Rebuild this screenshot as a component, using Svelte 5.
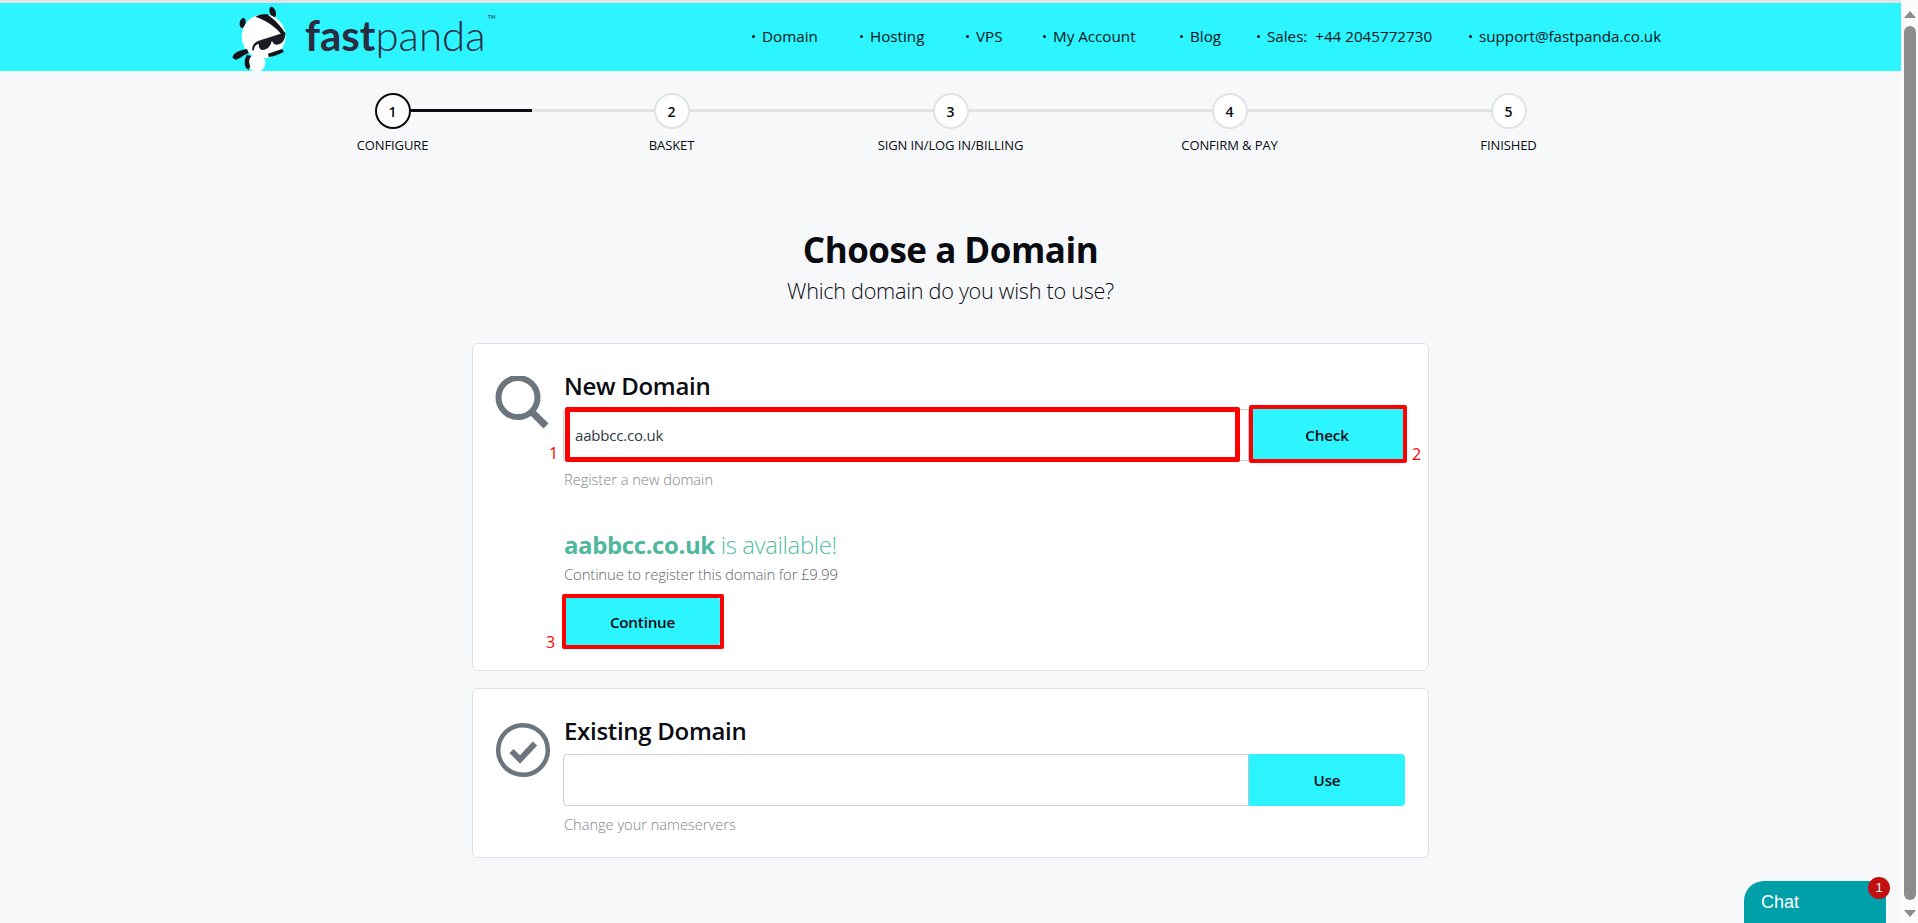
<script lang="ts">
  const navItems = [
    'Domain',
    'Hosting',
    'VPS',
    'My Account',
    'Blog',
    'Sales:\u00a0 +44 2045772730',
    'support@fastpanda.co.uk'
  ];

  const steps = ['Configure', 'Basket', 'Sign in/Log in/Billing', 'Confirm & Pay', 'Finished'];
</script>

<div class="window">
  <div class="page">
    <header class="topbar">
      <div class="logo">
        <svg class="panda" width="70" height="68" viewBox="0 0 210 204" aria-hidden="true">
          <ellipse cx="32" cy="60" rx="9" ry="15" fill="#14141c" transform="rotate(10 32 60)" />
          <ellipse cx="122" cy="27" rx="9" ry="16" fill="#14141c" transform="rotate(-20 122 27)" />
          <circle cx="95" cy="100" r="66" fill="#fff" />
          <path d="M70 41 C80 35 92 33 105 33 C128 50 148 70 160 92 L150 96 C132 72 102 52 70 41 Z" fill="#14141c" />
          <path d="M60 142 C60 125 68 118 80 113 L160 88 L160 96 C158 112 150 124 135 125 C128 125 122 120 120 113 L118 118 C116 130 105 140 92 141 C84 141 80 132 80 122 C70 125 66 132 66 142 Z" fill="#1c1c24" />
          <path d="M2 165 C0 155 15 142 45 138 L50 150 C35 155 22 170 10 170 Z" fill="#14141c" />
          <path d="M108 152 L150 138 L156 146 C140 155 125 160 110 162 Z" fill="#14141c" />
          <circle cx="74" cy="180" r="26" fill="#fff" />
          <path d="M45 155 C35 170 35 195 50 200 L55 190 C50 180 50 168 58 160 Z" fill="#14141c" />
        </svg>
        <span class="wordmark"><b>fast</b>panda<sup>TM</sup></span>
      </div>
      <nav class="nav">
        {#each navItems as item}
          <span class="nav-item">{item}</span>
        {/each}
      </nav>
    </header>

    <ol class="stepper">
      {#each steps as step, i}
        <li class="step" class:current={i === 0}>
          {#if i < steps.length - 1}
            <span class="connector"></span>
          {/if}
          <span class="dot">{i + 1}</span>
          <span class="step-label">{step}</span>
        </li>
      {/each}
    </ol>

    <div class="intro">
      <h1>Choose a Domain</h1>
      <p>Which domain do you wish to use?</p>
    </div>

    <section class="card first">
      <svg class="card-icon" width="56" height="56" viewBox="0 0 56 56" aria-hidden="true">
        <circle cx="23" cy="21.500" r="19.500" fill="none" stroke="#6c757d" stroke-width="6" />
        <path d="M36 35 L51 50" stroke="#6c757d" stroke-width="7" fill="none" />
      </svg>
      <div class="card-body">
        <h2>New Domain</h2>
        <div class="input-group">
          <div class="field">
            aabbcc.co.uk
            <span class="mark mark-input"></span>
            <span class="mark-num num-1">1</span>
          </div>
          <div class="action">
            Check
            <span class="mark mark-check"></span>
            <span class="mark-num num-2">2</span>
          </div>
        </div>
        <p class="hint">Register a new domain</p>
        <p class="result"><b>aabbcc.co.uk</b> is available!</p>
        <p class="price">Continue to register this domain for £9.99</p>
        <div class="action continue">
          Continue
          <span class="mark mark-continue"></span>
          <span class="mark-num num-3">3</span>
        </div>
      </div>
    </section>

    <section class="card second">
      <svg class="card-icon" width="56" height="56" viewBox="0 0 56 56" aria-hidden="true">
        <circle cx="28" cy="28" r="24.800" fill="none" stroke="#6c757d" stroke-width="4.500" />
        <path d="M16.500 29 L25 37.500 L40 21.500" fill="none" stroke="#6c757d" stroke-width="6" />
      </svg>
      <div class="card-body">
        <h2>Existing Domain</h2>
        <div class="input-group">
          <div class="field"></div>
          <div class="action">Use</div>
        </div>
        <p class="hint">Change your nameservers</p>
      </div>
    </section>

    <button class="chat">
      Chat
      <span class="badge">1</span>
    </button>
  </div>

  <aside class="scrollbar" aria-hidden="true">
    <span class="arrow up"></span>
    <span class="thumb"></span>
    <span class="arrow down"></span>
  </aside>
</div>

<style>
  :global(body) {
    margin: 0;
    overflow: hidden;
    background: #f6f8fa;
    font-family: "Open Sans", "Noto Sans", sans-serif;
    color: #0b0b12;
  }

  .window {
    display: flex;
    height: 923px;
    overflow: hidden;
  }

  .page {
    position: relative;
    flex: 1;
    min-width: 0;
    padding-top: 3px;
    background: #f6f8fa;
    box-shadow: inset 0 3px 0 #e4e4e4;
  }

  .topbar {
    display: flex;
    align-items: center;
    height: 68px;
    padding-left: 232px;
    background: #2cf5ff;
  }

  .logo {
    display: flex;
    align-items: center;
    width: 520px;
    height: 68px;
  }

  .panda {
    flex: none;
  }

  .wordmark {
    position: relative;
    margin-left: 3px;
    margin-top: -4px;
    font-family: Lato, sans-serif;
    font-size: 42px;
    font-weight: 300;
    color: #2a2c3f;
    line-height: 1;
  }

  .wordmark b {
    font-weight: 700;
  }

  .wordmark sup {
    position: absolute;
    top: 1px;
    right: -10px;
    font-size: 5px;
    font-weight: 400;
  }

  .nav {
    display: grid;
    grid-template-columns: 108px 106px 77px 137px 77px 212px auto;
    margin-top: -2px;
    font-size: 15.200px;
  }

  .nav-item {
    display: flex;
    align-items: center;
    white-space: nowrap;
    color: #04141a;
  }

  .nav-item::before {
    content: "";
    width: 3px;
    height: 3px;
    margin-right: 7px;
    border-radius: 50%;
    background: #04141a;
  }

  .stepper {
    display: grid;
    grid-template-columns: repeat(5, 279px);
    justify-content: center;
    margin: 22px 0 0;
    padding: 0;
    list-style: none;
  }

  .step {
    position: relative;
    display: flex;
    flex-direction: column;
    align-items: center;
    font-size: 13px;
  }

  .dot {
    position: relative;
    box-sizing: border-box;
    display: flex;
    align-items: center;
    justify-content: center;
    width: 36px;
    height: 36px;
    border: 2px solid #e2e3e5;
    border-radius: 50%;
    background: #fff;
    font-size: 14px;
    font-weight: 600;
  }

  .current .dot {
    border-color: #0b0b12;
  }

  .connector {
    position: absolute;
    top: 16px;
    left: 50%;
    width: 100%;
    height: 3px;
    background: #e2e3e5;
  }

  .current .connector {
    background: linear-gradient(to right, #0b0b12 139px, #e2e3e5 139px);
  }

  .step-label {
    margin-top: 7px;
    line-height: 18px;
    letter-spacing: -0.1px;
    text-transform: uppercase;
    white-space: nowrap;
  }

  .intro {
    margin-top: 72px;
    text-align: center;
  }

  h1 {
    margin: 0;
    font-size: 35px;
    font-weight: 700;
    line-height: 48px;
    letter-spacing: -0.5px;
  }

  .intro p {
    margin: 2px 0 0;
    font-size: 21.700px;
    font-weight: 300;
    line-height: 30px;
    letter-spacing: -0.3px;
  }

  .card {
    box-sizing: border-box;
    display: flex;
    gap: 12px;
    width: 957px;
    margin-left: 472px;
    padding: 0 23px 0 22px;
    border: 1px solid #dfe0e6;
    border-radius: 6px;
    background: #fff;
  }

  .first {
    height: 328px;
    margin-top: 37px;
    padding-top: 30px;
  }

  .second {
    height: 170px;
    margin-top: 17px;
    padding-top: 30px;
  }

  .second .card-icon {
    margin-top: 3px;
  }

  .card-icon {
    flex: none;
    margin-top: 2px;
  }

  .card-body {
    flex: 1;
    min-width: 0;
  }

  h2 {
    margin: 0;
    padding-left: 1px;
    font-size: 24px;
    font-weight: 600;
    line-height: 24px;
    letter-spacing: -0.3px;
  }

  .input-group {
    display: flex;
    height: 52px;
    margin-top: 11px;
  }

  .field {
    position: relative;
    box-sizing: border-box;
    display: flex;
    align-items: center;
    flex: 1;
    padding-left: 11px;
    border: 1px solid #ced0d6;
    border-right: 0;
    border-radius: 4px 0 0 4px;
    background: #fff;
    font-size: 15px;
    color: #2f3a45;
    letter-spacing: -0.2px;
  }

  .action {
    position: relative;
    flex: none;
    box-sizing: border-box;
    display: flex;
    align-items: center;
    justify-content: center;
    width: 157px;
    border-left: 1px solid #b4c8cc;
    border-radius: 0 4px 4px 0;
    background: #2cf5ff;
    font-size: 15.200px;
    font-weight: 600;
    color: #0b0b12;
    letter-spacing: -0.2px;
  }

  .continue {
    width: 155px;
    height: 49px;
    margin: 13px 0 0 2px;
    border: 0;
    border-radius: 4px;
  }

  /* red review annotations on top of the form */
  .mark {
    position: absolute;
    box-sizing: border-box;
    border: 4px solid #fe0000;
    border-radius: 2px;
    pointer-events: none;
  }

  .mark-input {
    top: -3px;
    bottom: -2px;
    left: 1px;
    right: 8px;
    border-width: 5px;
  }

  .mark-check {
    top: -4px;
    bottom: -2px;
    left: 0;
    right: -2px;
  }

  .mark-continue {
    inset: -3px -4px -3px -3px;
  }

  .mark-num {
    position: absolute;
    font-size: 16px;
    line-height: 20px;
    font-weight: 400;
    color: #fe0000;
  }

  .num-1 {
    left: -15px;
    top: 33px;
  }

  .num-2 {
    right: -16px;
    top: 35px;
  }

  .num-3 {
    left: -19px;
    top: 35px;
  }

  p {
    margin: 0;
  }

  .hint {
    margin-top: 8px;
    padding-left: 1px;
    font-size: 14.600px;
    font-weight: 300;
    line-height: 20px;
    color: #80858a;
  }

  .result {
    margin-top: 40px;
    padding-left: 1px;
    font-size: 24px;
    font-weight: 300;
    line-height: 32px;
    color: #55bda4;
    letter-spacing: -0.4px;
  }

  .result b {
    font-weight: 700;
    color: #4fb79d;
  }

  .price {
    margin-top: 3px;
    padding-left: 1px;
    font-size: 15px;
    font-weight: 300;
    line-height: 20px;
    color: #62676c;
    letter-spacing: -0.2px;
  }

  .chat {
    position: absolute;
    right: 15px;
    bottom: 0;
    width: 142px;
    height: 42px;
    padding: 0 0 0 17px;
    border: 0;
    border-radius: 20px 4px 0 0;
    background: #00a0a8;
    color: #fff;
    font-family: "Liberation Sans", Arial, sans-serif;
    font-size: 18px;
    text-align: left;
  }

  .badge {
    position: absolute;
    top: -4px;
    right: -4px;
    width: 22px;
    height: 22px;
    border-radius: 50%;
    background: #c01010;
    font-size: 13px;
    line-height: 22px;
    text-align: center;
  }

  .scrollbar {
    flex: none;
    display: flex;
    flex-direction: column;
    align-items: center;
    width: 17px;
    background: #fbfbfb;
  }

  .arrow {
    flex: none;
    width: 0;
    height: 0;
    border-left: 6px solid transparent;
    border-right: 6px solid transparent;
  }

  .up {
    margin-top: 11px;
    border-bottom: 7px solid #8c8c8c;
  }

  .down {
    margin: 10px 0 6px;
    border-top: 7px solid #8c8c8c;
  }

  .thumb {
    flex: 1;
    width: 12px;
    margin-top: 8px;
    border-radius: 6px;
    background: #8c8c8c;
  }
</style>
